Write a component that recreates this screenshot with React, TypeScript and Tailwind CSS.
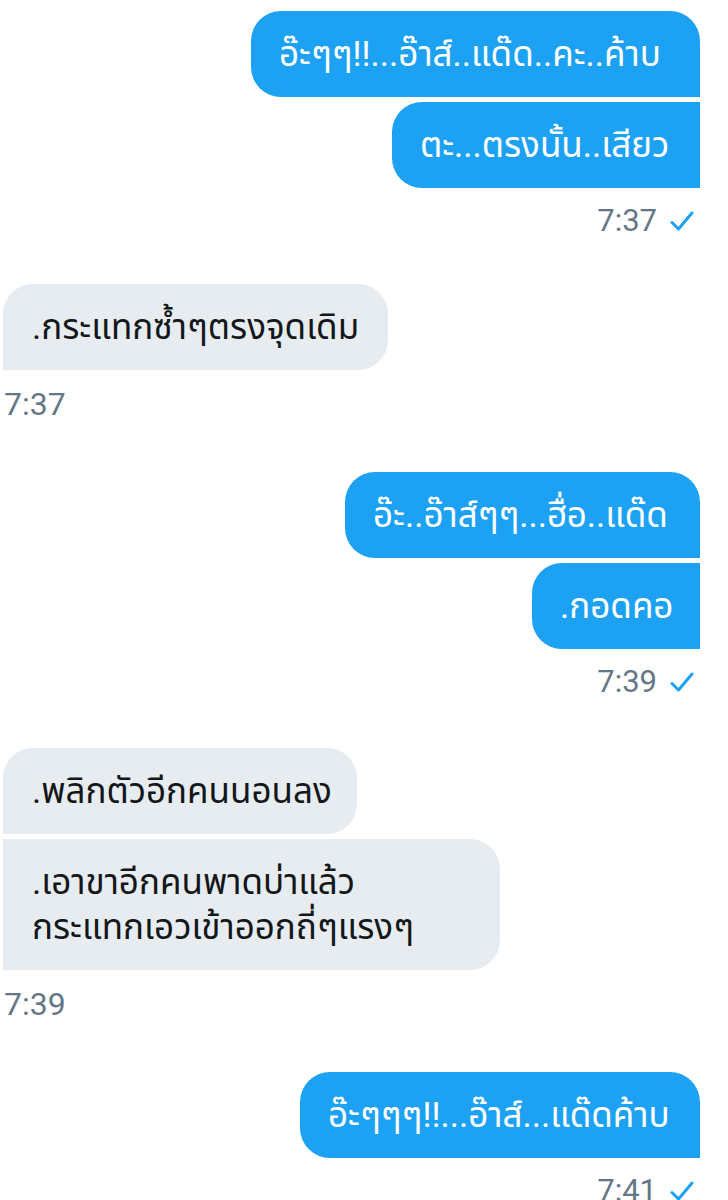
import React from 'react';

type Msg = { text: string[]; w: number };

const Check: React.FC = () => (
  <svg width="24" height="22" viewBox="0 0 24 22" fill="none" className="shrink-0">
    <path d="M2 12.5 L8.5 19 L22 3" stroke="#1da1f2" strokeWidth="3" strokeLinecap="round" strokeLinejoin="round" />
  </svg>
);

const Sent: React.FC<{ items: Msg[]; time: string; className?: string }> = ({ items, time, className }) => (
  <div className={`flex flex-col items-end pr-[28px] ${className ?? ''}`}>
    <div className="flex flex-col items-end gap-[5px]">
      {items.map((m, i) => (
        <div
          key={i}
          style={{ width: m.w }}
          className={`bg-[#1da1f2] text-white px-[28px] py-[20.5px] text-[35px] leading-[45px] whitespace-nowrap rounded-l-[30px] ${
            i === 0 ? 'rounded-tr-[30px]' : ''
          }`}
        >
          {m.text.map((t, j) => (
            <div key={j}>{t}</div>
          ))}
        </div>
      ))}
    </div>
    <div className="flex items-center gap-[13px] mt-[16px] pr-[6px] text-[31px] leading-[34px] text-[#657786]">
      <span>{time}</span>
      <Check />
    </div>
  </div>
);

const Received: React.FC<{ items: Msg[]; time: string; className?: string }> = ({ items, time, className }) => (
  <div className={`flex flex-col items-start pl-[3px] ${className ?? ''}`}>
    <div className="flex flex-col items-start gap-[5px]">
      {items.map((m, i) => (
        <div
          key={i}
          style={{ width: m.w }}
          className={`bg-[#e6ecf0] text-[#14171a] px-[29px] py-[20.5px] text-[35px] leading-[45px] whitespace-nowrap rounded-r-[30px] ${
            i === 0 ? 'rounded-tl-[30px]' : ''
          }`}
        >
          {m.text.map((t, j) => (
            <div key={j}>{t}</div>
          ))}
        </div>
      ))}
    </div>
    <div className="mt-[17px] pl-[1px] text-[32px] leading-[34px] text-[#657786]">{time}</div>
  </div>
);

export default function App() {
  return (
    <div
      className="w-[728px] h-[1200px] overflow-hidden bg-white flex flex-col pt-[11px]"
      style={{ fontFamily: "Roboto, 'Noto Sans Thai', 'Noto Sans', 'DejaVu Sans', sans-serif" }}
    >
      <Sent
        time="7:37"
        items={[
          { text: ['อ๊ะๆๆ!!...อ๊าส์..แด๊ด..คะ..ค้าบ'], w: 449 },
          { text: ['ตะ...ตรงนั้น..เสียว'], w: 308 },
        ]}
      />
      <Received className="mt-[46px]" time="7:37" items={[{ text: ['.กระแทกซ้ำๆตรงจุดเดิม'], w: 385 }]} />
      <Sent
        className="mt-[51px]"
        time="7:39"
        items={[
          { text: ['อ๊ะ..อ๊าส์ๆๆ...ฮื่อ..แด๊ด'], w: 355 },
          { text: ['.กอดคอ'], w: 168 },
        ]}
      />
      <Received
        className="mt-[49px]"
        time="7:39"
        items={[
          { text: ['.พลิกตัวอีกคนนอนลง'], w: 354 },
          { text: ['.เอาขาอีกคนพาดบ่าแล้ว', 'กระแทกเอวเข้าออกถี่ๆแรงๆ'], w: 497 },
        ]}
      />
      <Sent className="mt-[51px]" time="7:41" items={[{ text: ['อ๊ะๆๆๆ!!...อ๊าส์...แด๊ดค้าบ'], w: 400 }]} />
    </div>
  );
}
